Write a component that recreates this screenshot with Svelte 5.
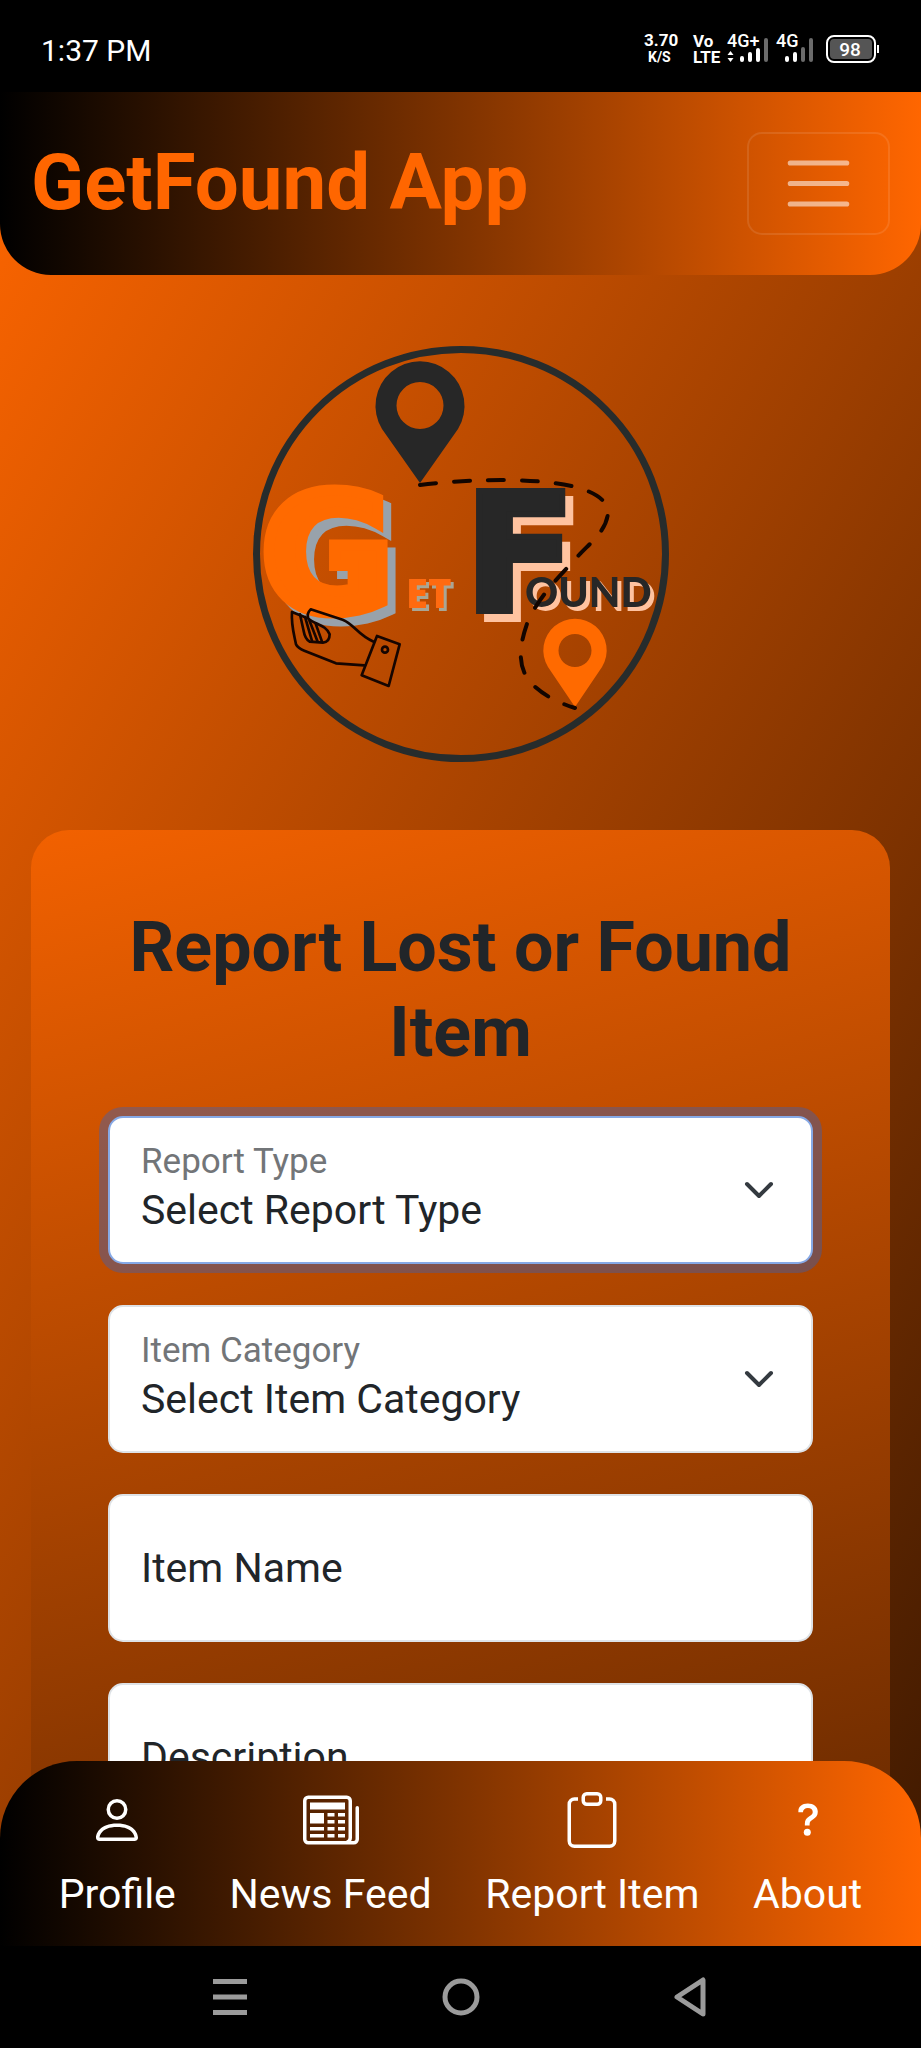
<script>
  let reportType = $state('');
  let category = $state('');
  let itemName = $state('');
  let description = $state('');
</script>

<div class="phone">
  <div class="status">
    <span class="clock">1:37 PM</span>
    <svg class="indicators" viewBox="0 2 240 40" aria-hidden="true">
      <g fill="#fff" font-family="Roboto, sans-serif" font-weight="700">
        <text x="4" y="18" font-size="17">3.70</text>
        <text x="8" y="34" font-size="14">K/S</text>
        <text x="53" y="19" font-size="17">Vo</text>
        <text x="53" y="35" font-size="17">LTE</text>
        <text x="87" y="19" font-size="18" font-weight="500">4G+</text>
        <text x="136" y="19" font-size="18" font-weight="500">4G</text>
      </g>
      <path d="M87.500 27l3-4 3 4zM87.500 30l3 4 3-4z" fill="#fff" />
      <g stroke-width="4" stroke-linecap="round" stroke="#fff">
        <path d="M102 30v2M110 26v6M118 22v10M147 30v2M155 26v6" />
        <path stroke="#6b6b6b" d="M126 12v20M163 21v11M171 12v20" />
      </g>
      <rect x="187" y="8" width="48" height="26" rx="7" fill="none" stroke="#fff" stroke-width="2" />
      <rect x="190" y="11" width="42" height="20" rx="4" fill="#555" />
      <rect x="237" y="17" width="2" height="8" fill="#fff" />
      <text x="210" y="28" font-size="19" text-anchor="middle" font-family="Roboto, sans-serif" font-weight="500" fill="#fff">98</text>
    </svg>
  </div>

  <div class="screen">
    <div class="page">
      <header class="topbar">
        <a class="brand" href="#home">GetFound App</a>
        <button class="toggler" type="button" aria-label="Menu">
          <svg viewBox="0 0 30 30">
            <path d="M4 7h22M4 15h22M4 23h22" stroke="#fff" stroke-opacity=".55" stroke-width="2" stroke-linecap="round" />
          </svg>
        </button>
      </header>

      <svg class="logo" viewBox="252 345 416 416" role="img" aria-label="Get Found">
        <circle cx="460" cy="553" r="204.500" fill="none" stroke="#272c2c" stroke-width="7" />
        <path fill="#272727" fill-rule="evenodd" d="M419 482L381 428A44.500 44.500 0 1 1 457 428ZM419 381a23.500 23.500 0 1 0 0 47a23.500 23.500 0 1 0 0-47Z" />
        <text class="initial get" x="260" y="610">G</text>
        <text class="initial found" x="463" y="610">F</text>
        <text class="rest-get" x="405" y="607">ET</text>
        <text class="rest-found" x="524" y="606">OUND</text>
        <path fill="#ff6a00" fill-rule="evenodd" d="M574 706L547 666A31.700 31.700 0 1 1 601 666ZM574 633a16.500 16.500 0 1 0 0 33a16.500 16.500 0 1 0 0-33Z" />
        <path
          d="M419 484C450 480 480 479 500 479C550 479 600 485 607 508C608 528 590 541 578 554C562 572 540 592 527 620C516 650 518 668 530 682C543 695 558 702 574 707"
          fill="none" stroke="#120500" stroke-width="4" stroke-linecap="round" stroke-dasharray="16 18" />
        <g transform="translate(240 480) scale(.3333)" fill="none" stroke="#160500" stroke-width="8" stroke-linecap="round" stroke-linejoin="round">
          <path d="M408 465L476 490L443 615L362 583Z" />
          <circle cx="432" cy="506" r="9" />
          <path d="M398 482C350 462 340 430 305 416L209 385C202 392 198 402 202 412C220 430 256 432 266 460C266 476 258 484 246 485L206 482C196 476 190 462 188 450L177 400" />
          <path d="M153 393C150 430 158 455 165 490C170 500 178 504 190 509L285 547L370 553M153 393L200 412M192 408L213 480M205 418L230 482M224 428L243 482" />
        </g>
      </svg>

      <main class="card">
        <h1>Report Lost or Found Item</h1>
        <form>
          <div class="field">
            <select id="type" class="active" bind:value={reportType}>
              <option value="">Select Report Type</option>
              <option value="lost">Lost</option>
              <option value="found">Found</option>
            </select>
            <label class="small" for="type">Report Type</label>
            <svg class="chevron" viewBox="0 0 16 16"><path d="m2 5 6 6 6-6" /></svg>
          </div>
          <div class="field">
            <select id="category" bind:value={category}>
              <option value="">Select Item Category</option>
              <option value="phone">Phone</option>
              <option value="keys">Keys</option>
            </select>
            <label class="small" for="category">Item Category</label>
            <svg class="chevron" viewBox="0 0 16 16"><path d="m2 5 6 6 6-6" /></svg>
          </div>
          <div class="field">
            <input id="name" type="text" bind:value={itemName} />
            <label for="name" class:small={itemName}>Item Name</label>
          </div>
          <div class="field">
            <textarea id="description" bind:value={description}></textarea>
            <label for="description" class:small={description}>Description</label>
          </div>
        </form>
      </main>
    </div>

    <nav class="tabs">
      <a href="#profile">
        <svg viewBox="0 0 16 16"><path d="M8 8a3 3 0 1 0 0-6 3 3 0 0 0 0 6m2-3a2 2 0 1 1-4 0 2 2 0 0 1 4 0m4 8c0 1-1 1-1 1H3s-1 0-1-1 1-4 6-4 6 3 6 4m-1-.004c-.001-.246-.154-.986-.832-1.664C11.516 10.680 10.289 10 8 10s-3.516.680-4.168 1.332c-.678.678-.830 1.418-.832 1.664z" /></svg>
        Profile
      </a>
      <a href="#news">
        <svg viewBox="0 0 16 16"><path d="M0 2.500A1.500 1.500 0 0 1 1.500 1h11A1.500 1.500 0 0 1 14 2.500v10.528c0 .3-.050.654-.238.972h.738a.5.5 0 0 0 .5-.5v-9a.5.5 0 0 1 1 0v9a1.500 1.500 0 0 1-1.500 1.500H1.497A1.497 1.497 0 0 1 0 13.500zM12 14c.370 0 .654-.211.853-.441.092-.106.147-.279.147-.531V2.500a.5.5 0 0 0-.5-.5h-11a.5.5 0 0 0-.5.5v11c0 .278.223.5.497.5z" /><path d="M2 3h10v2H2zm0 3h4v3H2zm0 4h4v1H2zm0 2h4v1H2zm5-6h2v1H7zm3 0h2v1h-2zM7 8h2v1H7zm3 0h2v1h-2zm-3 2h2v1H7zm3 0h2v1h-2zm-3 2h2v1H7zm3 0h2v1h-2z" /></svg>
        News Feed
      </a>
      <a href="#report">
        <svg viewBox="0 0 16 16"><path d="M4 1.500H3a2 2 0 0 0-2 2V14a2 2 0 0 0 2 2h10a2 2 0 0 0 2-2V3.500a2 2 0 0 0-2-2h-1v1h1a1 1 0 0 1 1 1V14a1 1 0 0 1-1 1H3a1 1 0 0 1-1-1V3.500a1 1 0 0 1 1-1h1z" /><path d="M9.500 1a.5.5 0 0 1 .5.5v1a.5.5 0 0 1-.5.5h-3a.5.5 0 0 1-.5-.5v-1a.5.5 0 0 1 .5-.5zm-3-1A1.500 1.500 0 0 0 5 1.500v1A1.500 1.500 0 0 0 6.500 4h3A1.500 1.500 0 0 0 11 2.500v-1A1.500 1.500 0 0 0 9.500 0z" /></svg>
        Report Item
      </a>
      <a href="#about">
        <svg viewBox="0 0 16 16"><path d="M5.250 5.500c0-1.300 1-2.200 2.700-2.200 1.650 0 2.850.9 2.850 2.350 0 1-.5 1.650-1.300 2.150-.8.480-1.050.8-1.050 1.450v.350H7.100v-.5c0-1.050.450-1.650 1.280-2.150.720-.450.970-.750.970-1.250 0-.7-.550-1.150-1.380-1.150-.850 0-1.370.450-1.420 1.250H5.250z" /><circle cx="7.800" cy="11.500" r="1" /></svg>
        About
      </a>
    </nav>
  </div>

  <div class="system">
    <button type="button" aria-label="Recent apps">
      <svg viewBox="0 0 40 40"><path d="M3 4.500h34M3 20h34M3 35.500h34" stroke-width="5" /></svg>
    </button>
    <button type="button" aria-label="Home">
      <svg viewBox="0 0 40 40"><circle cx="20" cy="20" r="16" stroke-width="5" /></svg>
    </button>
    <button type="button" aria-label="Back">
      <svg viewBox="0 0 40 40"><path d="M6 20L32 3V37Z" stroke-width="5" stroke-linejoin="round" /></svg>
    </button>
  </div>
</div>

<style>
  :global(body) {
    margin: 0;
    background: #000;
  }

  .phone {
    display: flex;
    flex-direction: column;
    height: 100vh;
    overflow: hidden;
    background: #000;
    color: #212529;
    font-family: Roboto, sans-serif;
    font-size: 41px;
  }

  .phone * {
    box-sizing: border-box;
  }

  .status {
    flex: none;
    display: flex;
    align-items: center;
    justify-content: space-between;
    height: 92px;
    padding: 8px 41px 0;
  }

  .clock {
    color: #fff;
    font-size: 30px;
  }

  .indicators {
    width: 240px;
    height: 40px;
  }

  .screen {
    position: relative;
    flex: 1;
    min-height: 0;
    background: linear-gradient(120deg, #ff6600 0, #000 2260px);
  }

  .page {
    display: flex;
    flex-direction: column;
    height: 100%;
    overflow-y: auto;
    scrollbar-width: none;
  }

  .topbar {
    flex: none;
    display: flex;
    align-items: center;
    justify-content: space-between;
    padding: 40px 31px;
    border-radius: 0 0 51px 51px;
    background: linear-gradient(90deg, #000, #ff6600);
  }

  .brand {
    padding-bottom: 2px;
    color: #ff6600;
    font-size: 78px;
    font-weight: 700;
    line-height: 96px;
    text-decoration: none;
  }

  .toggler {
    display: flex;
    align-items: center;
    justify-content: center;
    padding: 11px 31px;
    border: 2px solid rgba(255, 255, 255, 0.1);
    border-radius: 15px;
    background: none;
  }

  .toggler svg {
    width: 77px;
    height: 77px;
    fill: none;
  }

  .logo {
    flex: none;
    align-self: center;
    width: 416px;
    height: 416px;
    margin: 71px 0 68px;
  }

  .initial {
    font-family: 'DejaVu Sans', sans-serif;
    font-weight: 700;
  }

  .get {
    fill: #ff6a00;
    stroke: #ff6a00;
    stroke-width: 11px;
    font-size: 162px;
    filter: drop-shadow(8px 8px 0 #98a2ab);
  }

  .found {
    fill: #272727;
    stroke: #272727;
    stroke-width: 6px;
    font-size: 164px;
    filter: drop-shadow(8px 8px 0 #ffc3a0);
  }

  .rest-get {
    fill: #ff6a10;
    font-family: 'Open Sans', sans-serif;
    font-size: 40px;
    font-weight: 800;
    filter: drop-shadow(3px 3px 0 #a9a695);
  }

  .rest-found {
    fill: #272727;
    font-family: Lato, sans-serif;
    font-size: 41px;
    font-weight: 900;
    filter: drop-shadow(4px 4px 0 #ffc3a0);
  }

  .card {
    flex: none;
    margin: 0 31px 240px;
    padding: 75px 77px 77px;
    border-radius: 38px;
    background: linear-gradient(165deg, #f26100 0, #000 2150px);
  }

  h1 {
    margin: 0 0 41px;
    font-size: 70px;
    font-weight: 700;
    line-height: 85px;
    text-align: center;
  }

  form {
    display: flex;
    flex-direction: column;
    gap: 41px;
  }

  .field {
    position: relative;
    display: flex;
  }

  select,
  input,
  textarea {
    width: 100%;
    height: 148px;
    margin: 0;
    padding: 66px 31px 26px;
    border: 2px solid #dee2e6;
    border-radius: 15px;
    outline: none;
    appearance: none;
    resize: none;
    background: #fff;
    color: #212529;
    font: inherit;
  }

  .active,
  select:focus,
  input:focus,
  textarea:focus {
    border-color: #86a9e6;
    box-shadow: 0 0 0 9px rgba(30, 100, 220, 0.35);
  }

  label {
    position: absolute;
    top: 0;
    left: 33px;
    line-height: 148px;
    pointer-events: none;
  }

  .small {
    color: #727578;
    font-size: 35px;
    line-height: 92px;
  }

  .chevron {
    position: absolute;
    top: 58px;
    right: 38px;
    width: 32px;
    height: 32px;
    fill: none;
    stroke: #343a40;
    stroke-width: 2;
    stroke-linecap: round;
    stroke-linejoin: round;
    pointer-events: none;
  }

  .tabs {
    position: absolute;
    inset: auto 0 0;
    display: flex;
    justify-content: space-evenly;
    padding: 31px 5px 21px;
    border-radius: 77px 77px 0 0;
    background: linear-gradient(90deg, #000, #ff6600);
  }

  .tabs a {
    display: flex;
    flex-direction: column;
    align-items: center;
    gap: 15px;
    color: #fff;
    line-height: 62px;
    text-decoration: none;
  }

  .tabs svg {
    width: 56px;
    height: 56px;
    fill: #fff;
  }

  .system {
    flex: none;
    display: grid;
    grid-template-columns: repeat(3, 1fr);
    place-items: center;
    height: 102px;
    padding: 0 12.5%;
  }

  .system button {
    display: flex;
    padding: 8px;
    border: 0;
    background: none;
  }

  .system svg {
    width: 40px;
    height: 40px;
    fill: none;
    stroke: #9b9b9b;
  }
</style>
